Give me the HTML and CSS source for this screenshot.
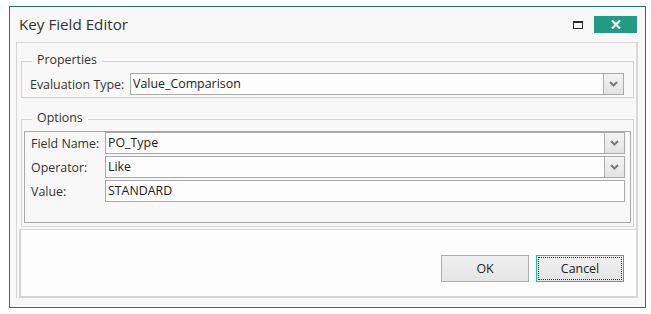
FILE: index.html
```html
<!DOCTYPE html>
<html>
<head>
<meta charset="utf-8">
<link rel="stylesheet" href="styles.css">
</head>
<body>
<div class="window">
  <div class="titlebar">
    <div class="title">Key Field Editor</div>
    <div class="controls">
      <span class="max-icon"></span>
      <span class="close-btn">
        <svg width="10" height="9" viewBox="0 0 10 9"><path d="M1 0.5 L9 8.5 M9 0.5 L1 8.5" stroke="#fff" stroke-width="2.2" fill="none"/></svg>
      </span>
    </div>
  </div>
  <div class="panel">
    <div class="panel-body">
      <div class="group group-props">
        <span class="group-title">Properties</span>
        <div class="row props-row">
          <span class="label">Evaluation Type:</span>
          <div class="combo"><span class="combo-text">Value_Comparison</span><span class="drop"><svg width="9" height="6" viewBox="0 0 9 6"><path d="M1 1 L4.5 4.5 L8 1" stroke="#7a7a7a" stroke-width="2" fill="none"/></svg></span></div>
        </div>
      </div>
      <div class="group group-opts">
        <span class="group-title">Options</span>
        <div class="frame">
          <div class="row opt-row">
            <span class="label">Field Name:</span>
            <div class="combo"><span class="combo-text">PO_Type</span><span class="drop"><svg width="9" height="6" viewBox="0 0 9 6"><path d="M1 1 L4.5 4.5 L8 1" stroke="#7a7a7a" stroke-width="2" fill="none"/></svg></span></div>
          </div>
          <div class="row opt-row">
            <span class="label">Operator:</span>
            <div class="combo"><span class="combo-text">Like</span><span class="drop"><svg width="9" height="6" viewBox="0 0 9 6"><path d="M1 1 L4.5 4.5 L8 1" stroke="#7a7a7a" stroke-width="2" fill="none"/></svg></span></div>
          </div>
          <div class="row opt-row">
            <span class="label">Value:</span>
            <div class="combo textbox"><span class="combo-text">STANDARD</span></div>
          </div>
        </div>
      </div>
      <div class="buttons">
        <button class="btn">OK</button>
        <button class="btn btn-focus"><span class="focus-rect">Cancel</span></button>
      </div>
    </div>
  </div>
</div>
</body>
</html>
```
FILE: styles.css
```css
* { box-sizing: border-box; }
html, body { margin: 0; padding: 0; background: #ffffff; }
body {
  font-family: "Open Sans", "Noto Sans", "Liberation Sans", sans-serif;
  font-size: 12.4px;
  color: #222;
}
.window {
  margin: 6px 0 0 9px;
  width: 637px;
  height: 302px;
  border: 1px solid #1b7a68;
  background: #f8f8f8;
}
.titlebar {
  height: 35px;
  display: flex;
  align-items: flex-start;
  justify-content: space-between;
}
.title {
  font-size: 15.2px;
  color: #333;
  padding: 7px 0 0 9px;
  line-height: 20px;
}
.controls {
  display: flex;
  align-items: center;
  padding: 9px 8px 0 0;
}
.max-icon {
  width: 10px;
  height: 8px;
  border: 1px solid #2a2a2a;
  border-top-width: 2px;
  margin-right: 11px;
}
.close-btn {
  width: 43px;
  height: 17px;
  background: #229b85;
  display: flex;
  align-items: center;
  justify-content: center;
}
.panel {
  margin-left: 6px;
  width: 623px;
  border-top: 1px solid #d6d6d6;
  border-left: 1px solid #d6d6d6;
}
.panel-body {
  width: 621px;
  border-right: 2px solid #d9d9d9;
  padding-top: 18px;
}
.group {
  position: relative;
  margin-left: 4px;
  width: 613px;
  border: 1px solid #d3d3d3;
}
.group-title {
  position: absolute;
  top: -10px;
  left: 10px;
  padding: 0 5px;
  line-height: 16px;
  background: #f8f8f8;
  color: #333;
}
.group-props {
  padding: 11px 9px 2px 8px;
}
.group-opts {
  margin-top: 21px;
  padding: 11px 2px 3px 2px;
}
.frame {
  border: 1px solid #a8a8a8;
  padding: 0 5px 20px 6px;
  display: flex;
  flex-direction: column;
  gap: 2px;
}
.row {
  display: grid;
  align-items: center;
  height: 22px;
}
.props-row { grid-template-columns: 100px 1fr; }
.opt-row { grid-template-columns: 74px 1fr; }
.label { color: #333; white-space: nowrap; }
.combo {
  height: 22px;
  border: 1px solid #a9a9a9;
  background: #fdfdfd;
  display: flex;
  align-items: stretch;
}
.combo-text {
  flex: 1;
  padding-left: 2px;
  line-height: 20px;
  color: #222;
}
.drop {
  width: 20px;
  border-left: 1px solid #b2b2b2;
  background: linear-gradient(#f3f3f3, #e3e3e3);
  display: flex;
  align-items: center;
  justify-content: center;
}
.buttons {
  margin: 2px 0 0 2px;
  height: 69px;
  background: #fdfdfd;
  border-top: 1px solid #d4d4d4;
  border-left: 2px solid #d4d4d4;
  border-bottom: 2px solid #d4d4d4;
  display: flex;
  justify-content: flex-end;
  align-items: flex-start;
  gap: 7px;
  padding: 25px 12px 0 0;
}
.btn {
  width: 88px;
  height: 27px;
  border: 1px solid #adadad;
  background: linear-gradient(#f0f0f0, #e5e5e5);
  font-family: "Open Sans", "Noto Sans", "Liberation Sans", sans-serif;
  font-size: 12.4px;
  color: #222;
  padding: 0;
  display: flex;
  align-items: center;
  justify-content: center;
}
.btn-focus {
  border: 1px solid #1fbf9f;
  padding: 1px;
}
.focus-rect {
  width: 100%;
  height: 100%;
  border: 1px dotted #333;
  display: flex;
  align-items: center;
  justify-content: center;
}
```
